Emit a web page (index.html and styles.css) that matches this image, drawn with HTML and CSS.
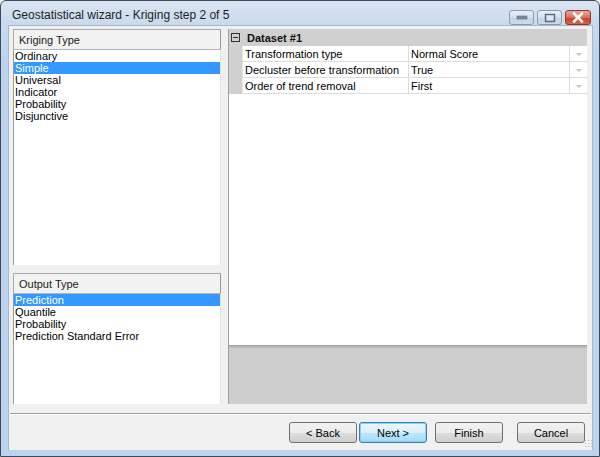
FILE: index.html
```html
<!DOCTYPE html>
<html>
<head>
<meta charset="utf-8">
<link rel="stylesheet" href="styles.css">
</head>
<body>
<div class="window">
  <div class="titlebar">
    <span class="title">Geostatistical wizard - Kriging step 2 of 5</span>
    <div class="caption-buttons">
      <div class="cbtn min"><svg width="12" height="6" viewBox="0 0 12 6"><rect x="1" y="1" width="10" height="3" fill="#7a8ba0" stroke="#5b6b80" stroke-width="0.6"/></svg></div>
      <div class="cbtn max"><svg width="12" height="10" viewBox="0 0 12 10"><rect x="1.5" y="1.5" width="9" height="7" fill="none" stroke="#56667c" stroke-width="1.4"/><rect x="3" y="3" width="6" height="4" fill="#dfe8f2"/></svg></div>
      <div class="cbtn close"><svg width="14" height="11" viewBox="0 0 14 11"><path d="M3 1.5 L11 9.5 M11 1.5 L3 9.5" stroke="#ffffff" stroke-width="2.6" stroke-linecap="round"/></svg></div>
    </div>
  </div>
  <div class="client">
    <div class="main">
      <div class="left">
        <div class="group kriging">
          <div class="col-header">Kriging Type</div>
          <ul class="list">
            <li>Ordinary</li>
            <li class="sel">Simple</li>
            <li>Universal</li>
            <li>Indicator</li>
            <li>Probability</li>
            <li>Disjunctive</li>
          </ul>
        </div>
        <div class="group output">
          <div class="col-header">Output Type</div>
          <ul class="list">
            <li class="sel">Prediction</li>
            <li>Quantile</li>
            <li>Probability</li>
            <li>Prediction Standard Error</li>
          </ul>
        </div>
      </div>
      <div class="grid">
        <div class="grid-header">
          <span class="expander"><svg width="9" height="9" viewBox="0 0 9 9"><rect x="0.5" y="0.5" width="8" height="8" fill="none" stroke="#333" stroke-width="1"/><path d="M2 4.5 H7" stroke="#333" stroke-width="1"/></svg></span>
          <span class="cat">Dataset #1</span>
        </div>
        <div class="prow">
          <div class="gutter"></div>
          <div class="pname">Transformation type</div>
          <div class="pval">Normal Score</div>
          <div class="pdrop"><span class="tri"></span></div>
        </div>
        <div class="prow">
          <div class="gutter"></div>
          <div class="pname">Decluster before transformation</div>
          <div class="pval">True</div>
          <div class="pdrop"><span class="tri"></span></div>
        </div>
        <div class="prow">
          <div class="gutter"></div>
          <div class="pname">Order of trend removal</div>
          <div class="pval">First</div>
          <div class="pdrop"><span class="tri"></span></div>
        </div>
        <div class="grid-fill"></div>
        <div class="splitter"></div>
        <div class="desc"></div>
      </div>
    </div>
    <div class="separator"></div>
    <div class="buttons">
      <button class="btn back">&lt; Back</button>
      <button class="btn next default">Next &gt;</button>
      <button class="btn finish">Finish</button>
      <button class="btn cancel">Cancel</button>
      <span class="grip"></span>
    </div>
  </div>
</div>
</body>
</html>
```
FILE: styles.css
```css
* { box-sizing: border-box; }
html, body { margin: 0; padding: 0; }
body {
  width: 600px;
  height: 457px;
  background: #ffffff;
  font-family: Tahoma, "Liberation Sans", Arial, sans-serif;
  font-size: 11px;
  color: #000;
  overflow: hidden;
}
.window {
  width: 600px;
  height: 457px;
  border: 1px solid #3d4a5a;
  border-radius: 6px 6px 0 0;
  background: linear-gradient(to bottom, #d9e4f1 0px, #c9daee 24px, #bcd4ef 60px, #bcd4ef 100%);
  display: flex;
  flex-direction: column;
  padding: 0 6px 6px 7px;
}
.titlebar {
  height: 24px;
  flex: none;
  display: flex;
  align-items: flex-start;
  position: relative;
}
.title {
  font-family: "Liberation Sans", Arial, sans-serif;
  font-size: 12px;
  color: #1e1e1e;
  margin-left: 4px;
  margin-top: 7px;
}
.caption-buttons {
  margin-left: auto;
  margin-top: 9px;
  display: flex;
  gap: 3px;
  margin-right: 2px;
}
.cbtn {
  height: 15px;
  border: 1px solid #8a9bb3;
  border-radius: 3px;
  display: flex;
  align-items: center;
  justify-content: center;
  background: linear-gradient(to bottom, #e8eef6 0%, #d5e0ee 50%, #c3d2e6 51%, #ccdaea 100%);
}
.cbtn.min { width: 25px; }
.cbtn.max { width: 25px; }
.cbtn.close {
  width: 26px;
  border-color: #8f3a2c;
  background: linear-gradient(to bottom, #e8a598 0%, #d7705f 50%, #c7422c 51%, #d6634b 100%);
}
.client {
  flex: 1;
  background: #f0f0f0;
  display: flex;
  flex-direction: column;
  border: 1px solid #a7b6c9;
  border-bottom: none;
}
.main {
  display: flex;
  height: 375px;
  margin-top: 3px;
  margin-left: 4px;
  gap: 7px;
}
.left {
  width: 208px;
  display: flex;
  flex-direction: column;
  gap: 8px;
}
.group { display: flex; flex-direction: column; }
.group.kriging { height: 236px; }
.group.output { height: 131px; }
.col-header {
  height: 21px;
  flex: none;
  border: 1px solid #a9a9a9;
  border-right-color: #9c9c9c;
  border-bottom-color: #b5b5b5;
  background: #f2f2f2;
  padding-left: 5px;
  padding-top: 1px;
  line-height: 19px;
  color: #1a1a1a;
}
.list {
  list-style: none;
  margin: 0;
  padding: 0;
  flex: 1;
  background: #ffffff;
  border-left: 1px solid #9a9a9a;
  border-right: 1px solid #e3e3e3;
}
.list li {
  height: 12px;
  line-height: 13px;
  padding-left: 1px;
  white-space: nowrap;
  color: #000;
}
.list li.sel {
  background: #3399ff;
  color: #ffffff;
}
.grid {
  width: 359px;
  display: flex;
  flex-direction: column;
  border-left: 1px solid #a0a0a0;
  background: #ffffff;
}
.grid-header {
  height: 17px;
  background: #d0d0d0;
  display: flex;
  align-items: center;
  flex: none;
}
.expander {
  display: flex;
  margin-left: 2px;
  width: 9px;
  height: 9px;
}
.cat {
  font-weight: bold;
  margin-left: 7px;
  color: #111;
}
.prow {
  height: 16px;
  display: flex;
  flex: none;
}
.gutter {
  width: 13px;
  background: #d0d0d0;
  flex: none;
}
.pname, .pval, .pdrop {
  border-bottom: 1px solid #dcdcdc;
  line-height: 15px;
  padding-top: 1px;
  white-space: nowrap;
}
.pname {
  width: 167px;
  padding-left: 2px;
  border-right: 1px solid #dcdcdc;
  border-left: 1px solid #e6e6e6;
}
.pval {
  width: 161px;
  padding-left: 2px;
  border-right: 1px solid #dcdcdc;
}
.pdrop {
  flex: 1;
  display: flex;
  align-items: center;
  justify-content: center;
}
.tri {
  width: 0;
  height: 0;
  border-left: 3px solid transparent;
  border-right: 3px solid transparent;
  border-top: 3px solid #c4c4c4;
}
.grid-fill { flex: 1; }
.splitter {
  height: 3px;
  flex: none;
  border-top: 1px solid #9f9f9f;
  background: #b9b9b9;
}
.desc {
  height: 56px;
  flex: none;
  background: #cdcdcd;
}
.separator {
  height: 2px;
  margin: 9px 1px 0 1px;
  border-top: 1px solid #a0a0a0;
  border-bottom: 1px solid #ffffff;
}
.buttons {
  display: flex;
  margin-top: 7px;
  padding-left: 280px;
  position: relative;
  height: 20px;
}
.btn {
  width: 68px;
  height: 21px;
  font-family: Tahoma, "Liberation Sans", Arial, sans-serif;
  font-size: 11px;
  color: #000;
  border: 1px solid #707070;
  border-radius: 3px;
  background: linear-gradient(to bottom, #f2f2f2 0%, #ebebeb 50%, #dddddd 51%, #cfcfcf 100%);
  padding: 0;
  line-height: 18px;
}
.btn.next { margin-left: 2px; }
.btn.finish { margin-left: 8px; }
.btn.cancel { margin-left: 14px; }
.btn.default {
  border-color: #3c7fb1;
  box-shadow: inset 0 0 0 1px #86d1f7;
  background: linear-gradient(to bottom, #eaf6fd 0%, #d9f0fc 50%, #bee6fd 51%, #a7d9f5 100%);
}
.grip {
  position: absolute;
  right: 0;
  bottom: -5px;
  width: 8px;
  height: 8px;
  background-image: radial-gradient(circle, #b8b8b8 0.8px, transparent 1px);
  background-size: 3px 3px;
}
```
